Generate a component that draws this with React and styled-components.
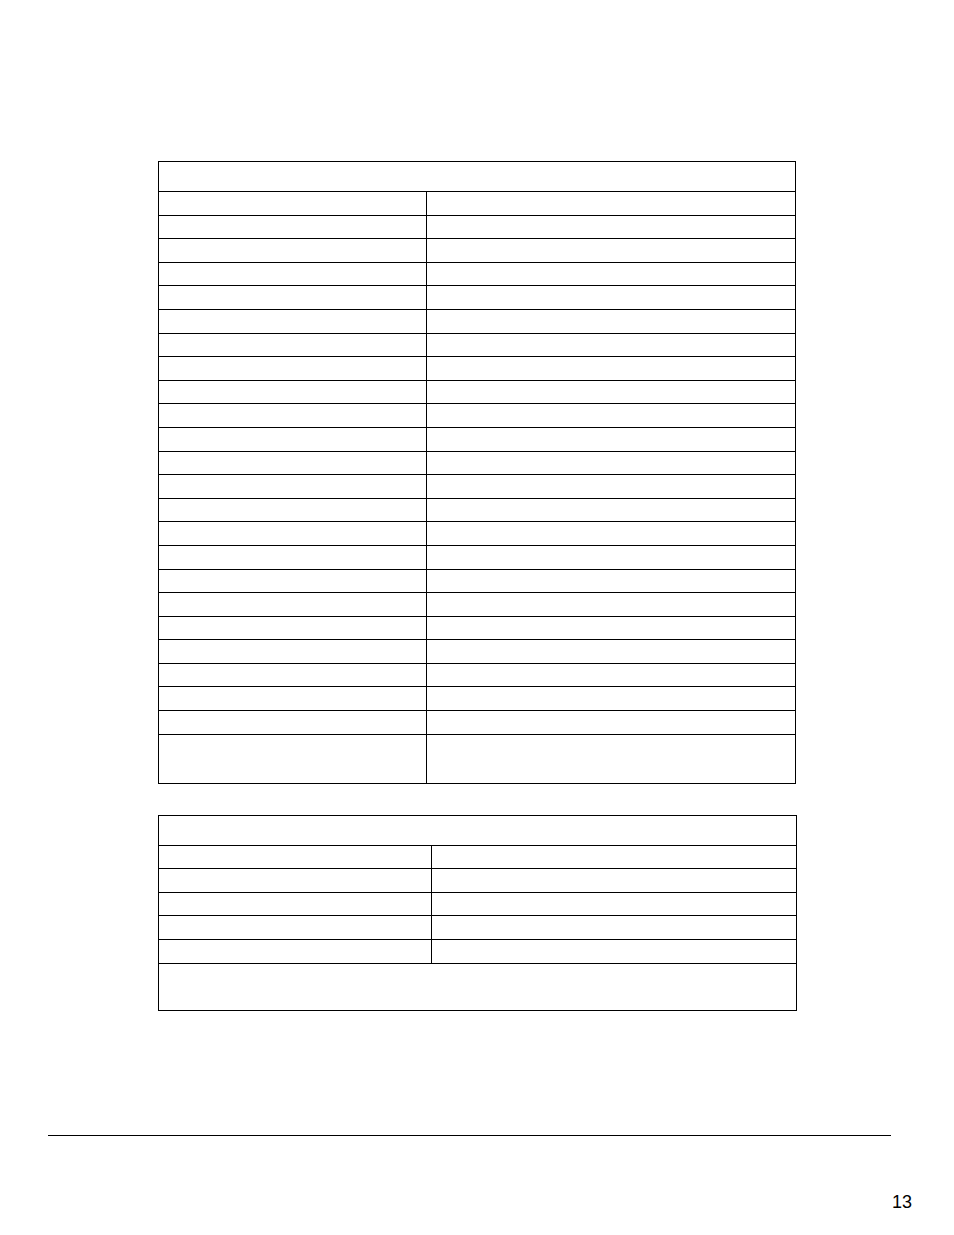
import React from "react";
import styled, { createGlobalStyle } from "styled-components";

const Global = createGlobalStyle`
  html, body { margin: 0; padding: 0; background: #fff; }
  body { font-family: "Liberation Sans", Arial, sans-serif; color: #000; }
  * { box-sizing: border-box; }
`;

const Page = styled.div`
  width: 954px;
  height: 1235px;
  padding-top: 161px;
  display: flex;
  flex-direction: column;
`;

const Table = styled.div`
  margin-left: 158px;
  width: ${(p) => p.$width}px;
  border: 1px solid #000;
  margin-top: ${(p) => p.$top || 0}px;
  display: flex;
  flex-direction: column;
`;

const Header = styled.div`
  height: 30px;
  border-bottom: 1px solid #000;
`;

const Row = styled.div`
  display: grid;
  grid-template-columns: ${(p) => p.$col}px 1fr;
  height: ${(p) => p.$h}px;
  border-bottom: ${(p) => (p.$last ? "none" : "1px solid #000")};
`;

const Cell = styled.div`
  border-right: ${(p) => (p.$divider ? "1px solid #000" : "none")};
`;

const Note = styled.div`
  height: 46px;
`;

const Footer = styled.footer`
  margin-top: 124px;
  margin-left: 48px;
  width: 843px;
  border-top: 1px solid #000;
`;

const PageNumber = styled.div`
  align-self: flex-end;
  margin-right: 42px;
  margin-top: 57px;
  font-size: 18px;
  line-height: 18px;
`;

export default function App() {
  const rows1 = Array.from({ length: 23 });
  const rows2 = Array.from({ length: 5 });
  return (
    <>
      <Global />
      <Page>
        <Table $width={638}>
          <Header />
          {rows1.map((_, i) => (
            <Row key={i} $col={268} $h={23.6}>
              <Cell $divider />
              <Cell />
            </Row>
          ))}
          <Row $col={268} $h={48} $last>
            <Cell $divider />
            <Cell />
          </Row>
        </Table>
        <Table $width={639} $top={31}>
          <Header />
          {rows2.map((_, i) => (
            <Row key={i} $col={273} $h={23.6}>
              <Cell $divider />
              <Cell />
            </Row>
          ))}
          <Note />
        </Table>
        <Footer />
        <PageNumber>13</PageNumber>
      </Page>
    </>
  );
}
